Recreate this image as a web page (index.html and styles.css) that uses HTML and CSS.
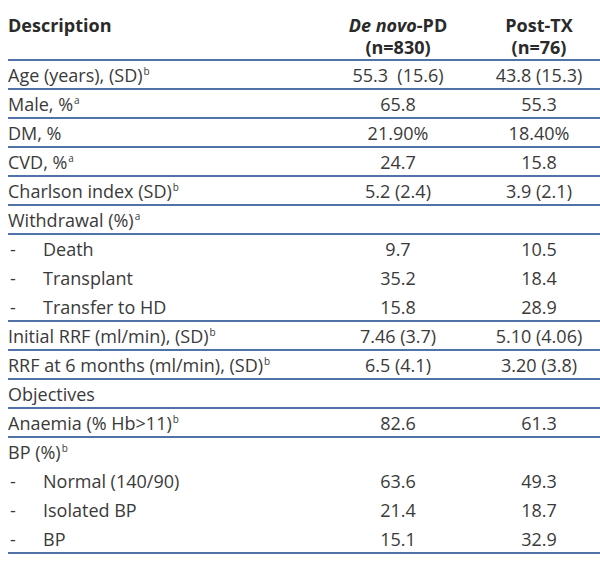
FILE: index.html
```html
<!DOCTYPE html>
<html>
<head>
<meta charset="utf-8">
<link rel="stylesheet" href="styles.css">
</head>
<body>
<table class="tbl">
  <colgroup>
    <col class="c1"><col class="c2"><col class="c3">
  </colgroup>
  <thead>
    <tr class="line">
      <th class="desc">Description</th>
      <th class="num"><i>De novo</i>-PD<br>(n=830)</th>
      <th class="num">Post-TX<br>(n=76)</th>
    </tr>
  </thead>
  <tbody>
    <tr class="line"><td>Age (years), (SD)<sup>b</sup></td><td class="num">55.3&nbsp; (15.6)</td><td class="num">43.8 (15.3)</td></tr>
    <tr class="line"><td>Male, %<sup>a</sup></td><td class="num">65.8</td><td class="num">55.3</td></tr>
    <tr class="line"><td>DM, %</td><td class="num">21.90%</td><td class="num">18.40%</td></tr>
    <tr class="line"><td>CVD, %<sup>a</sup></td><td class="num">24.7</td><td class="num">15.8</td></tr>
    <tr class="line"><td>Charlson index (SD)<sup>b</sup></td><td class="num">5.2 (2.4)</td><td class="num">3.9 (2.1)</td></tr>
    <tr class="line"><td>Withdrawal (%)<sup>a</sup></td><td class="num"></td><td class="num"></td></tr>
    <tr><td class="sub"><span class="dash">-</span>Death</td><td class="num">9.7</td><td class="num">10.5</td></tr>
    <tr><td class="sub"><span class="dash">-</span>Transplant</td><td class="num">35.2</td><td class="num">18.4</td></tr>
    <tr class="line"><td class="sub"><span class="dash">-</span>Transfer to HD</td><td class="num">15.8</td><td class="num">28.9</td></tr>
    <tr class="line"><td>Initial RRF (ml/min), (SD)<sup>b</sup></td><td class="num">7.46 (3.7)</td><td class="num">5.10 (4.06)</td></tr>
    <tr class="line"><td>RRF at 6 months (ml/min), (SD)<sup>b</sup></td><td class="num">6.5 (4.1)</td><td class="num">3.20 (3.8)</td></tr>
    <tr class="line"><td>Objectives</td><td class="num"></td><td class="num"></td></tr>
    <tr class="line"><td>Anaemia (% Hb&gt;11)<sup>b</sup></td><td class="num">82.6</td><td class="num">61.3</td></tr>
    <tr><td>BP (%)<sup>b</sup></td><td class="num"></td><td class="num"></td></tr>
    <tr><td class="sub"><span class="dash">-</span>Normal (140/90)</td><td class="num">63.6</td><td class="num">49.3</td></tr>
    <tr><td class="sub"><span class="dash">-</span>Isolated BP</td><td class="num">21.4</td><td class="num">18.7</td></tr>
    <tr class="line"><td class="sub"><span class="dash">-</span>BP</td><td class="num">15.1</td><td class="num">32.9</td></tr>
  </tbody>
</table>
</body>
</html>
```
FILE: styles.css
```css
html, body {
  background: #ffffff;
}
body {
  margin: 0 0 0 8px;
  font-family: "Open Sans", "Noto Sans", sans-serif;
  color: #3a3a3a;
}
.tbl {
  width: 592px;
  border-collapse: collapse;
  table-layout: fixed;
  font-size: 18px;
}
.c1 { width: 310px; }
.c2 { width: 160px; }
.c3 { width: 122px; }
th, td {
  padding: 0;
  font-weight: normal;
  text-align: left;
  white-space: nowrap;
}
thead th {
  font-weight: bold;
  font-size: 18px;
  height: 60px;
  line-height: 22px;
  vertical-align: top;
  padding-top: 14px;
  box-sizing: border-box;
  color: #2a2a2a;
}
tbody td {
  height: 25px;
  line-height: 25px;
  padding: 2px 0 2px;
  vertical-align: middle;
}
tr.line td {
  padding-bottom: 0;
}
tr.line th, tr.line td {
  border-bottom: 2px solid #4f73a8;
}
.num, thead th.num {
  text-align: center;
}
.dash {
  display: inline-block;
  width: 35px;
  padding-left: 2px;
  box-sizing: border-box;
}
sup {
  font-size: 10px;
  line-height: 0;
  vertical-align: 7px;
  margin-left: 1px;
}
```
